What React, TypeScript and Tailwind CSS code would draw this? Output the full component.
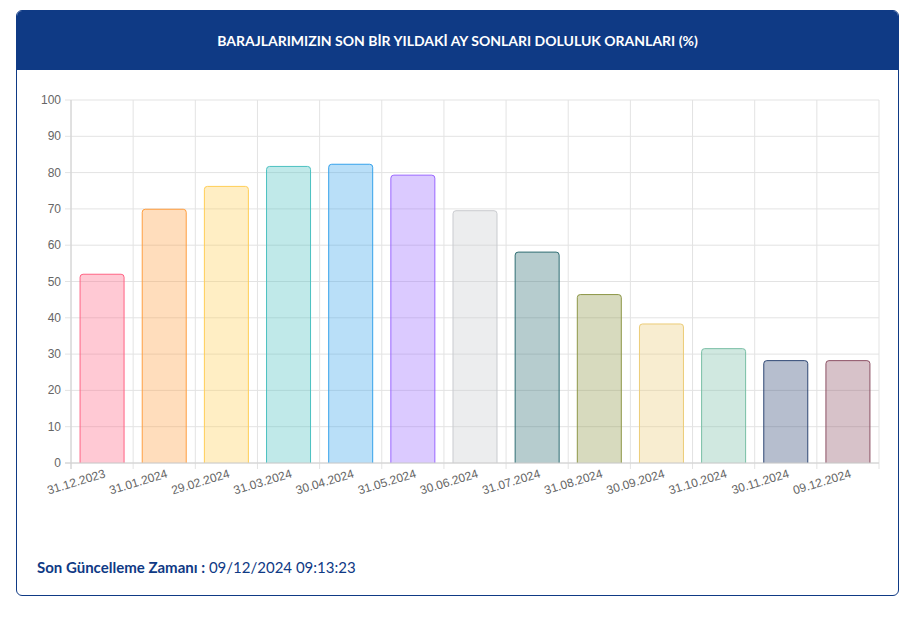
const bars = [
  { label: "31.12.2023", value: 52.0, color: "255,99,132" },
  { label: "31.01.2024", value: 69.9, color: "255,159,64" },
  { label: "29.02.2024", value: 76.2, color: "255,205,86" },
  { label: "31.03.2024", value: 81.7, color: "75,192,192" },
  { label: "30.04.2024", value: 82.3, color: "54,162,235" },
  { label: "31.05.2024", value: 79.3, color: "153,102,255" },
  { label: "30.06.2024", value: 69.5, color: "201,203,207" },
  { label: "31.07.2024", value: 58.1, color: "47,110,115" },
  { label: "31.08.2024", value: 46.4, color: "140,150,70" },
  { label: "30.09.2024", value: 38.3, color: "236,204,120" },
  { label: "31.10.2024", value: 31.5, color: "120,190,165" },
  { label: "30.11.2024", value: 28.2, color: "45,70,115" },
  { label: "09.12.2024", value: 28.2, color: "140,80,100" },
];

const X0 = 71;
const X1 = 879;
const Y0 = 463;
const Y100 = 100;
const step = (X1 - X0) / bars.length;
const yOf = (v: number) => Y0 - ((Y0 - Y100) * v) / 100;

function Chart() {
  return (
    <svg width="881" height="455" className="block">
      <g transform="translate(-17,-70)" style={{ fontFamily: "'Liberation Sans', Arial, sans-serif" }}>
        {[0, 10, 20, 30, 40, 50, 60, 70, 80, 90, 100].map((t) => (
          <g key={t}>
            <line x1={X0 - 6} x2={X1} y1={yOf(t)} y2={yOf(t)} stroke="#e3e3e3" />
            <text x={X0 - 10} y={yOf(t) + 4} textAnchor="end" fontSize="12" fill="#666">{t}</text>
          </g>
        ))}
        {bars.map((_, i) => (
          <line key={i} x1={X0 + i * step} x2={X0 + i * step} y1={Y100} y2={Y0 + 6} stroke="#e3e3e3" />
        ))}
        <line x1={X1} x2={X1} y1={Y100} y2={Y0 + 6} stroke="#e3e3e3" />
        <line x1={X0} x2={X0} y1={Y100} y2={Y0 + 6} stroke="#d0d0d0" />
        {bars.map((b, i) => {
          const cx = X0 + i * step + step / 2;
          const y = yOf(b.value);
          return (
            <g key={b.label}>
              <path
                d={`M${cx - 22} ${Y0} V${y + 3} Q${cx - 22} ${y} ${cx - 19} ${y} H${cx + 19} Q${cx + 22} ${y} ${cx + 22} ${y + 3} V${Y0}`}
                fill={`rgba(${b.color},0.35)`}
                stroke={`rgb(${b.color})`}
                strokeWidth="1"
              />
              <text x={cx + 4} y={477} textAnchor="end" fontSize="12" fill="#666" transform={`rotate(-17 ${cx + 4} 477)`}>{b.label}</text>
            </g>
          );
        })}
        <line x1={X0 - 6} x2={X1} y1={Y0} y2={Y0} stroke="#d0d0d0" />
      </g>
    </svg>
  );
}

export default function App() {
  return (
    <div className="min-h-screen bg-white pt-[10px] pl-4 pr-4" style={{ fontFamily: "Lato, 'Noto Sans', sans-serif" }}>
      <div className="w-[883px] h-[586px] rounded-md border border-[#0f3a85] overflow-hidden flex flex-col">
        <div className="h-[59px] shrink-0 bg-[#0f3a85] flex items-center justify-center text-white font-bold text-[14px]">
          BARAJLARIMIZIN SON BİR YILDAKİ AY SONLARI DOLULUK ORANLARI (%)
        </div>
        <Chart />
        <div className="pl-5 pt-[31px] text-[15px] text-[#0f3a85]">
          <span className="font-bold">Son Güncelleme Zamanı :</span> 09/12/2024 09:13:23
        </div>
      </div>
    </div>
  );
}
